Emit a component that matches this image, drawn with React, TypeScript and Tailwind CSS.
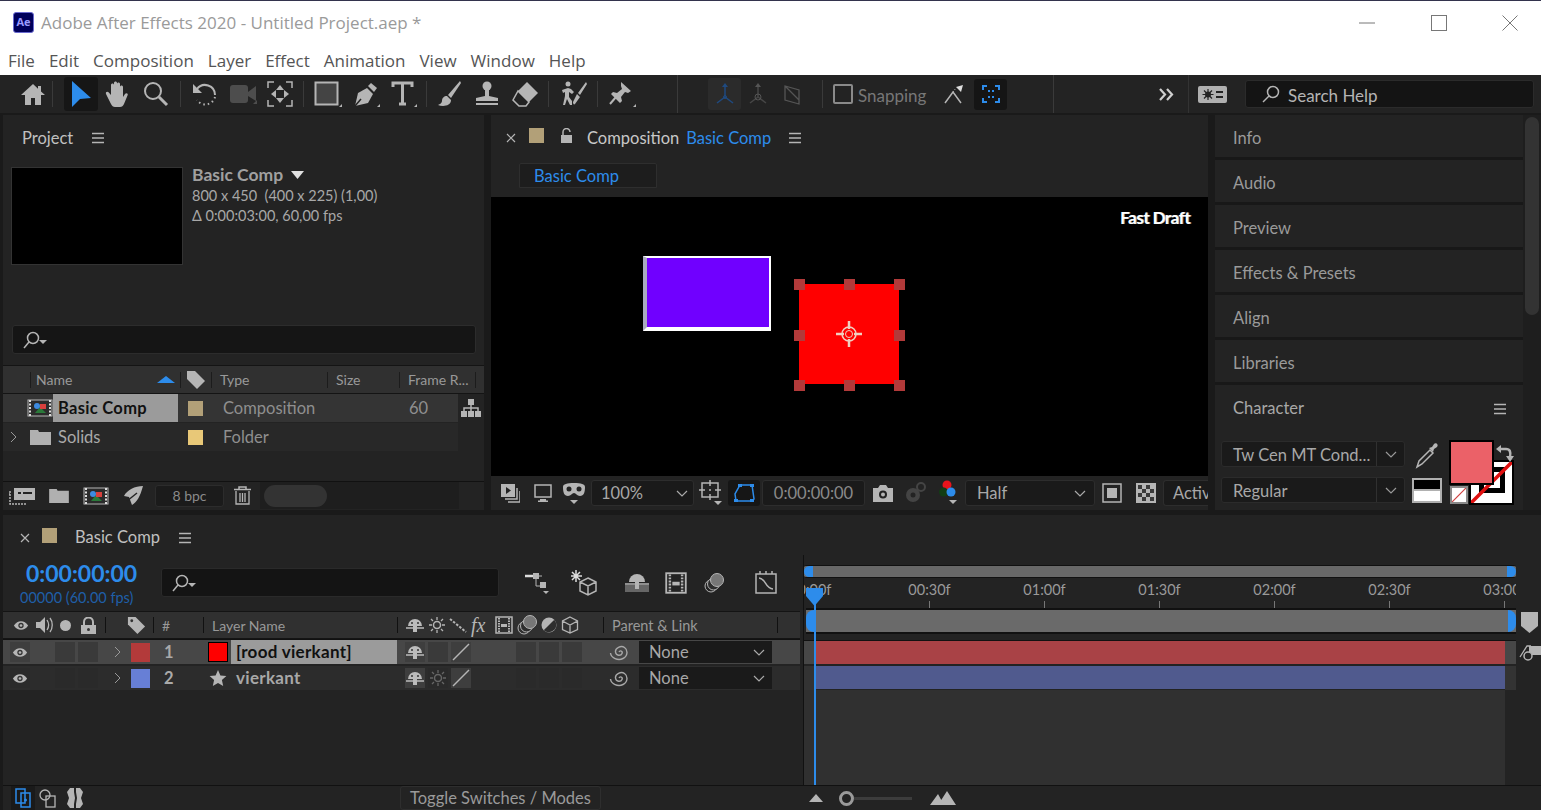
import React from "react"

const G = "#b5b5b5"

const Icon = ({ w = 24, h = 24, vb, children, className = "" }: { w?: number; h?: number; vb?: string; children: React.ReactNode; className?: string }) => (
	<svg width={w} height={h} viewBox={vb || `0 0 ${w} ${h}`} className={"shrink-0 " + className} fill="none">
		{children}
	</svg>
)

const Home = () => (
	<Icon w={26} h={24}>
		<path d="M13 2 1 13h4v10h6v-7h4v7h6V13h4l-4-3.6V4h-3v2.7z" fill={G} />
	</Icon>
)
const Arrow = () => (
	<Icon w={22} h={28}>
		<path d="M2 1v26l8-8 11-1z" fill="#2d8ceb" />
	</Icon>
)
const Hand = () => (
	<Icon w={26} h={28}>
		<path d="M6 24 1 14c-.8-2 1.6-3 2.8-1.4L6 15V5c0-2 3-2 3 0v7V3c0-2 3-2 3 0v9V4c0-2 3-2 3 0v9V7c0-2 3-2 3 0v10l2-3c1.200-1.700 3.500-.5 2.600 1.300L19 24c-1 2-2 3-4 3h-5c-2 0-3-1-4-3z" fill={G} />
	</Icon>
)
const Zoom = () => (
	<Icon w={26} h={26}>
		<circle cx="10" cy="10" r="8" stroke={G} strokeWidth="2" />
		<path d="m16 16 8 8" stroke={G} strokeWidth="3" />
	</Icon>
)
const Rotate = () => (
	<Icon w={26} h={26}>
		<path d="M5 8a10 10 0 0 1 18 6" stroke={G} strokeWidth="2" />
		<path d="M23 16a10 10 0 0 1-18 3" stroke={G} strokeWidth="2" strokeDasharray="1.500 3" />
		<path d="M1 3v9h9z" fill={G} />
	</Icon>
)
const Camera = () => (
	<Icon w={28} h={22}>
		<rect x="1" y="2" width="18" height="18" rx="3" fill="#4d4d4d" />
		<path d="m19 9 8-6v15l-8-5z" fill="#4d4d4d" />
		<path d="M28 21h-4l4-4z" fill="#4d4d4d" />
	</Icon>
)
const PanBehind = () => (
	<Icon w={26} h={26}>
		<path d="M1 7V1h6M19 1h6v6M1 19v6h6M25 19v6h-6" stroke={G} strokeWidth="1.500" />
		<path d="M13 4l4 5H9zM13 22l4-5H9zM4 13l5-4v8zM22 13l-5-4v8z" fill={G} />
	</Icon>
)
const RectTool = () => (
	<Icon w={28} h={26}>
		<rect x="1.500" y="1.500" width="22" height="22" fill="#444" stroke={G} strokeWidth="2" />
		<path d="M28 26h-3l3-3z" fill={G} />
	</Icon>
)
const Pen = () => (
	<Icon w={28} h={28}>
		<path d="M3 26 6 13l9-5 6 6-5 9z" fill={G} />
		<path d="m16 6 3-3 6 5-3 4z" fill={G} />
		<path d="m3 26 6-7" stroke="#232323" strokeWidth="1.500" />
		<path d="M28 27h-3l3-3z" fill={G} />
	</Icon>
)
const TextTool = () => (
	<Icon w={26} h={26}>
		<path d="M2 6V2h19v4M11.500 2v21M8 23h7" stroke={G} strokeWidth="3" />
		<path d="M26 26h-3l3-3z" fill={G} />
	</Icon>
)
const Brush = () => (
	<Icon w={26} h={28}>
		<path d="M24 1 12 15l3 3L25 3z" fill={G} />
		<path d="M11 16c-3 0-5 2-5 5 0 2-2 3-4 4 5 2 13 1 13-5z" fill={G} />
	</Icon>
)
const Stamp = () => (
	<Icon w={28} h={26}>
		<circle cx="14" cy="5" r="4.500" fill={G} />
		<path d="M12 9h4v6l9 2v3H3v-3l9-2z" fill={G} />
		<path d="M3 23h22" stroke={G} strokeWidth="2" />
	</Icon>
)
const Eraser = () => (
	<Icon w={28} h={28}>
		<path d="m16 2 11 11-9 9-11-11z" fill={G} />
		<path d="m7 11 11 11-3 4H8l-6-6z" stroke={G} strokeWidth="1.500" />
	</Icon>
)
const Roto = () => (
	<Icon w={30} h={30}>
		<circle cx="10" cy="5" r="2.500" fill={G} />
		<path d="m4 11 6-2 3 1 3 3-2 2-3-2v5l3 4v4h-2l-3-6-2 6H5l2-9v-4l-2 1z" fill={G} />
		<path d="M28 3 20 14l2 2 7-11zM19 15l3 3-5 7c-1 1-2 0-2-2z" fill={G} />
	</Icon>
)
const Pin = () => (
	<Icon w={28} h={28}>
		<path d="m13 2 10 9-3 2-3-1-4 5 1 4-2 2-9-9 2-2 4 1 5-4-1-3z" fill={G} />
		<path d="M8 17 2 24" stroke={G} strokeWidth="2" />
		<path d="M28 27h-3l3-3z" fill={G} />
	</Icon>
)
const AxisIcon = ({ c, dim }: { c: string; dim?: boolean }) => (
	<Icon w={22} h={24}>
		<path d="M11 4v11M11 15l-8 6M11 15l8 6" stroke={c} strokeWidth="1.500" opacity={dim ? 0.7 : 1} />
		<path d="m11 1 3 4H8z" fill={c} />
		<circle cx="11" cy="15" r={dim ? 3 : 1.500} stroke={c} />
	</Icon>
)
const Snap = () => (
	<Icon w={22} h={22}>
		<path d="M2 20 10 9l8 11" stroke={G} strokeWidth="1.500" />
		<path d="m20 2-7 2 5 5z" fill="#ddd" />
		<path d="m10 9 3-4" stroke={G} strokeDasharray="1 1.500" />
	</Icon>
)
const FocusBox = () => (
	<Icon w={18} h={18}>
		<path d="M1 5V1h4M13 1h4v4M1 13v4h4M17 13v4h-4M6 6h2M10 6h2M6 12h2M10 12h2" stroke="#2d8ceb" strokeWidth="2" />
	</Icon>
)
const SearchIcon = ({ caret }: { caret?: boolean }) => (
	<Icon w={26} h={18}>
		<circle cx="10" cy="7" r="5.500" stroke={G} strokeWidth="1.500" />
		<path d="M6 11 1 17" stroke={G} strokeWidth="1.500" />
		{caret && <path d="M16 9h8l-4 4z" fill={G} />}
	</Icon>
)
const Chevron = ({ c = "#aaa" }: { c?: string }) => (
	<Icon w={12} h={7}>
		<path d="m1 1 5 5 5-5" stroke={c} strokeWidth="1.200" />
	</Icon>
)
const Menu = () => (
	<Icon w={14} h={12}>
		<path d="M1 1.500h12M1 6h12M1 10.500h12" stroke={G} strokeWidth="1.500" />
	</Icon>
)
const Close = () => (
	<Icon w={10} h={10}>
		<path d="m1 1 8 8M9 1 1 9" stroke={G} strokeWidth="1.200" />
	</Icon>
)
const Right = () => (
	<Icon w={7} h={12}>
		<path d="m1 1 5 5-5 5" stroke="#999" strokeWidth="1" />
	</Icon>
)
const Eye = () => (
	<Icon w={16} h={11} vb="0 0 18 12">
		<path d="M1 6c4-6.500 12-6.500 16 0-4 6.500-12 6.500-16 0z" fill={G} />
		<circle cx="9" cy="6" r="3" fill="#333" />
		<circle cx="9" cy="6" r="1.500" fill={G} />
	</Icon>
)
const Tag = () => (
	<Icon w={19} h={19} vb="0 0 20 20">
		<path d="M1 1h8l10 10-8 8L1 9z" fill={G} />
		<circle cx="5" cy="5" r="1.500" fill="#333" />
	</Icon>
)
const Shy = ({ dim }: { dim?: boolean }) => (
	<Icon w={20} h={16}>
		<path d="M3 9a7 7 0 0 1 14 0z" fill={dim ? "#aaa" : "#bbb"} />
		<path d="M1 11h18" stroke="#bbb" strokeWidth="1.500" />
		<path d="M8 6h4v9H8z" fill="#bbb" />
		<circle cx="7" cy="6" r="1" fill="#333" />
		<circle cx="13" cy="6" r="1" fill="#333" />
	</Icon>
)
const Sun = ({ c = G }: { c?: string }) => (
	<Icon w={16} h={16}>
		<circle cx="8" cy="8" r="3.500" stroke={c} strokeWidth="1.500" />
		<path d="M8 0v3M8 13v3M0 8h3M13 8h3M2 2l2 2M12 12l2 2M14 2l-2 2M4 12l-2 2" stroke={c} strokeWidth="1.300" />
	</Icon>
)
const Film = ({ w = 18, h = 18 }: { w?: number; h?: number }) => (
	<Icon w={w} h={h} vb="0 0 18 18">
		<rect x="1" y="1" width="16" height="16" stroke={G} strokeWidth="1.500" />
		<path d="M4 2v14M14 2v14" stroke={G} strokeWidth="2" strokeDasharray="1.500 1" />
		<path d="M6 8h6v3H6z" fill={G} />
	</Icon>
)
const Stack = () => (
	<Icon w={20} h={20}>
		<circle cx="7" cy="13" r="6" stroke={G} />
		<circle cx="9.500" cy="11" r="6" fill="#2e2e2e" stroke={G} />
		<circle cx="13" cy="7" r="6.500" fill="#777" stroke={G} />
	</Icon>
)
const Adjust = () => (
	<Icon w={16} h={16}>
		<circle cx="8" cy="8" r="7.500" fill={G} />
		<path d="M13.300 2.700A7.500 7.500 0 0 1 2.700 13.300z" fill="#2e2e2e" />
	</Icon>
)
const Cube = ({ c = G, s = 18 }: { c?: string; s?: number }) => (
	<Icon w={s} h={s} vb="0 0 18 18">
		<path d="M9 1 16.500 5v8.500L9 17l-7.500-3.500V5zM1.500 5 9 9l7.500-4M9 9v8" stroke={c} strokeWidth="1.300" />
	</Icon>
)
const Spiral = () => (
	<Icon w={20} h={18}>
		<path d="M10 9c1-2 4-1 3 1.500S7 13 6.500 9 12 2 15.500 4.500 19 13 14 15.500 2 15 1.500 10" stroke="#a8a8a8" strokeWidth="1.400" />
	</Icon>
)
const Slash = () => (
	<Icon w={18} h={18}>
		<path d="M1 17 17 1" stroke={G} strokeWidth="1.500" />
	</Icon>
)
const Star = () => (
	<Icon w={18} h={18}>
		<path d="m9 1 2.400 5.500 6 .6-4.500 4 1.300 6L9 14l-5.200 3 1.300-6-4.500-4 6-.6z" fill={G} />
	</Icon>
)
const CompIcon = ({ w = 26, h = 18 }: { w?: number; h?: number }) => (
	<Icon w={w} h={h} vb="0 0 26 18">
		<rect x="1" y="1" width="24" height="16" fill="#2b2b2b" stroke={G} />
		<path d="M3 1v16M23 1v16" stroke="#ddd" strokeWidth="2" strokeDasharray="2 1.500" />
		<path d="m8 14 5-6 6 6z" fill="#2a7a3a" />
		<circle cx="10" cy="7" r="3" fill="#3d8be0" />
		<rect x="13" y="5" width="6" height="5" fill="#d8403d" />
	</Icon>
)
const FolderIcon = ({ w = 21, h = 16 }: { w?: number; h?: number }) => (
	<Icon w={w} h={h} vb="0 0 21 16">
		<path d="M0 1h8l1 2h12v13H0z" fill="#b0b0b0" />
	</Icon>
)

const Sep = ({ className = "h-[26px] mx-[2px]" }: { className?: string }) => (
	<div className={"w-px bg-[#3a3a3a] shrink-0 " + className} />
)

const Slot = ({ children, className = "w-[38px]" }: { children?: React.ReactNode; className?: string }) => (
	<div className={"flex items-center justify-center shrink-0 " + className}>{children}</div>
)

const TitleBar = () => (
	<div className="bg-white shrink-0 border-t border-[#33334d] font-['Open_Sans',sans-serif]">
		<div className="h-[43px] flex items-center">
			<div className="ml-[13px] w-[21px] h-[21px] rounded-[3px] bg-[#00005b] border border-[#6a6ad0] text-[#9a9aff] font-bold text-[11px] flex items-center justify-center">Ae</div>
			<span className="ml-[7px] text-[17px] text-[#9a9a9a] whitespace-nowrap">Adobe After Effects 2020 - Untitled Project.aep *</span>
			<div className="ml-auto flex items-center h-full text-[#777]">
				<Slot className="w-[64px]"><Icon w={16} h={2}><path d="M0 1h16" stroke="#777" /></Icon></Slot>
				<Slot className="w-[80px]"><Icon w={16} h={16}><rect x=".5" y=".5" width="15" height="15" stroke="#777" /></Icon></Slot>
				<Slot className="w-[62px]"><Icon w={16} h={16}><path d="m.5.5 15 15M15.500.5l-15 15" stroke="#777" /></Icon></Slot>
			</div>
		</div>
		<div className="h-[31px] flex items-center pl-[8px] gap-[14px] text-[17px] text-[#555] pt-[3px]">
			{["File", "Edit", "Composition", "Layer", "Effect", "Animation", "View", "Window", "Help"].map((m) => (
				<span key={m}>{m}</span>
			))}
		</div>
	</div>
)

const Toolbar = () => (
	<div className="h-[40px] bg-[#232323] shrink-0 flex items-center border-b-2 border-[#1a1a1a]">
		<div className="w-[14px] shrink-0" />
		<Slot><Home /></Slot>
		<Sep className="h-[26px] mr-[11px]" />
		<Slot className="w-[34px] h-[34px] bg-[#161616] rounded-[3px]"><Arrow /></Slot>
		<Slot className="w-[39px]"><Hand /></Slot>
		<Slot className="w-[38px]"><Zoom /></Slot>
		<Sep className="h-[26px] mx-[5px]" />
		<Slot><Rotate /></Slot>
		<Slot><Camera /></Slot>
		<Slot className="w-[36px]"><PanBehind /></Slot>
		<Sep className="h-[26px] mx-[5px]" />
		<Slot><RectTool /></Slot>
		<Slot><Pen /></Slot>
		<Slot><TextTool /></Slot>
		<Sep className="h-[26px] mx-[3px]" />
		<Slot><Brush /></Slot>
		<Slot><Stamp /></Slot>
		<Slot className="w-[37px]"><Eraser /></Slot>
		<Sep className="h-[26px] mx-[5px]" />
		<Slot><Roto /></Slot>
		<Sep className="h-[26px] mx-[5px]" />
		<Slot><Pin /></Slot>
		<Sep className="h-[38px] ml-[36px] mr-[30px] bg-[#2c2c2c]" />
		<Slot className="w-[33px] h-[32px] bg-[#2b2b2b] rounded-[3px]"><AxisIcon c="#1f4a80" /></Slot>
		<Slot className="w-[34px]"><AxisIcon c="#555" dim /></Slot>
		<Slot className="w-[34px]"><Icon w={22} h={24}><path d="M4 4v14l14 4V8zM4 4l14 14" stroke="#555" strokeWidth="1.300" /></Icon></Slot>
		<Sep className="h-[28px] ml-[13px] mr-[10px]" />
		<div className="w-[20px] h-[20px] rounded-[2px] border-2 border-[#8a8a8a] shrink-0" />
		<span className="ml-[5px] mt-[3px] text-[#777] text-[17px] w-[85px] shrink-0">Snapping</span>
		<Snap />
		<div className="w-[9px] shrink-0" />
		<Slot className="w-[33px] h-[31px] bg-[#151515] rounded-[3px]"><FocusBox /></Slot>
		<Sep className="h-[38px] ml-[46px] bg-[#2c2c2c]" />
		<Icon w={16} h={13} className="ml-[104px]">
			<path d="m2 1 5 5.500L2 12M9 1l5 5.500L9 12" stroke="#d0d0d0" strokeWidth="2.200" />
		</Icon>
		<Sep className="h-[38px] ml-[14px] mr-[9px] bg-[#333]" />
		<div className="w-[29px] h-[17px] rounded-[2px] bg-[#b0b0b0] shrink-0 flex items-center justify-center">
			<Icon w={25} h={13}>
				<circle cx="8" cy="6.500" r="3" fill="#232323" />
				<path d="M8 1v11M2.500 6.500h11M4 2.500l8 8M12 2.500l-8 8" stroke="#232323" strokeWidth="1.200" />
				<path d="M16 4h7M16 9h7" stroke="#232323" strokeWidth="2" />
			</Icon>
		</div>
		<div className="ml-[18px] w-[289px] h-[28px] rounded-[3px] bg-[#141414] border border-[#2b2b2b] flex items-center pl-[16px] shrink-0">
			<Icon w={19} h={18}>
				<circle cx="11" cy="7" r="5.500" stroke={G} strokeWidth="1.500" />
				<path d="M7 11 1 17" stroke={G} strokeWidth="1.500" />
			</Icon>
			<span className="ml-[7px] mt-[3px] text-[#b5b5b5] text-[17px]">Search Help</span>
		</div>
	</div>
)

const ColHead = ({ className, children }: { className: string; children?: React.ReactNode }) => (
	<div className={"flex items-center h-[16px] border-r border-[#1c1c1c] shrink-0 " + className}>{children}</div>
)

const ProjectPanel = () => (
	<div className="w-[481px] ml-[3px] bg-[#232323] flex flex-col shrink-0 text-[#a8a8a8]">
		<div className="h-[46px] flex items-center pl-[19px] gap-[18px] text-[#c0c0c0] text-[16.5px] shrink-0">
			<span>Project</span>
			<Menu />
		</div>
		<div className="h-[164px] flex pl-[8px] pt-[6px] gap-[9px] shrink-0">
			<div className="w-[172px] h-[98px] bg-black border border-[#333]" />
			<div className="text-[14.5px] leading-[20px] -mt-[2px]">
				<div className="flex items-center gap-[8px] text-[17.5px] font-bold text-[#a0a0a0]">
					Basic Comp
					<Icon w={13} h={8}><path d="M0 0h13L6.500 8z" fill="#e0e0e0" /></Icon>
				</div>
				<div className="mt-[1px]">800 x 450&nbsp; (400 x 225) (1,00)</div>
				<div>Δ 0:00:03:00, 60,00 fps</div>
			</div>
		</div>
		<div className="h-[40px] shrink-0 pl-[9px]">
			<div className="w-[464px] h-[29px] bg-[#151515] border border-[#2c2c2c] rounded-[3px] flex items-center pl-[10px]">
				<SearchIcon caret />
			</div>
		</div>
		<div className="h-[29px] bg-[#303030] border-y border-[#141414] flex items-center text-[14px] text-[#999] shrink-0">
			<ColHead className="w-[28px]" />
			<ColHead className="w-[150px] pl-[5px] justify-between pr-[5px]">
				Name
				<Icon w={18} h={7}><path d="M9 0l9 7H0z" fill="#2d8ceb" /></Icon>
			</ColHead>
			<ColHead className="w-[31px] justify-center"><Icon w={20} h={20}><path d="M1 1h8l10 10-8 8L1 9z" fill={G} /></Icon></ColHead>
			<ColHead className="w-[116px] pl-[8px]">Type</ColHead>
			<ColHead className="w-[72px] pl-[8px]">Size</ColHead>
			<ColHead className="w-[76px] pl-[8px]">Frame R...</ColHead>
		</div>
		<div className="flex flex-1 min-h-0">
			<div className="w-[455px] shrink-0">
				<div className="h-[28px] bg-[#343434] flex items-center text-[16.5px]">
					<Slot className="w-[24px]" />
					<Slot className="w-[26px]"><CompIcon /></Slot>
					<div className="w-[125px] h-full bg-[#9b9b9b] text-[#111] font-bold pl-[5px] flex items-center shrink-0 tracking-[.3px]">Basic Comp</div>
					<Slot className="w-[35px]"><div className="w-[15px] h-[15px] bg-[#b2a078]" /></Slot>
					<span className="ml-[10px] w-[186px] text-[#8f8f8f]">Composition</span>
					<span className="text-[#8f8f8f]">60</span>
				</div>
				<div className="h-[29px] bg-[#282828] flex items-center text-[16.5px] border-t border-[#232323]">
					<Slot className="w-[20px]"><Right /></Slot>
					<Slot className="w-[34px]"><FolderIcon /></Slot>
					<span className="w-[121px] pl-[1px] shrink-0 text-[#aaa]">Solids</span>
					<Slot className="w-[35px]"><div className="w-[15px] h-[15px] bg-[#e8c878]" /></Slot>
					<span className="ml-[10px] text-[#8f8f8f]">Folder</span>
				</div>
			</div>
			<Slot className="w-[26px] h-[28px]">
				<Icon w={20} h={18}>
					<path d="M7 0h6v6H7zM0 12h6v6H0zM7 12h6v6H7zM14 12h6v6h-6z" fill={G} />
					<path d="M10 6v3M3 12V9h14v3M10 9v3" stroke={G} strokeWidth="1.500" />
				</Icon>
			</Slot>
		</div>
		<div className="h-[28px] border-t border-[#111] flex items-center shrink-0 mb-[1px]">
			<Slot className="w-[38px]">
				<Icon w={26} h={18}>
					<path d="M1 4v13h16M1 7h-1" stroke={G} strokeWidth="1.500" strokeDasharray="2 1" />
					<rect x="5" y="1" width="21" height="12" fill={G} />
					<path d="M9 6h3M14 6h9" stroke="#232323" strokeWidth="2" />
				</Icon>
			</Slot>
			<Slot className="w-[36px]"><FolderIcon w={20} h={15} /></Slot>
			<Slot className="w-[37px]"><CompIcon w={26} h={18} /></Slot>
			<Slot className="w-[37px]">
				<Icon w={20} h={20}>
					<path d="M20 0C12 0 4 4 1 10l5 1c1 3 2 5 3 8 5-3 8-8 11-19z" fill={G} />
					<path d="M4 15 14 7" stroke="#232323" strokeWidth="1.500" />
				</Icon>
			</Slot>
			<div className="w-[69px] h-[22px] ml-[4px] rounded-[3px] bg-[#1b1b1b] border border-[#2c2c2c] text-[#8a8a8a] text-[14px] flex items-center justify-center shrink-0">8 bpc</div>
			<Slot className="w-[36px]">
				<Icon w={17} h={19}>
					<path d="M0 3.500h17M5 3V1h7v2" stroke={G} strokeWidth="1.500" />
					<path d="M2 5v13h13V5M6 7v9M8.500 7v9M11 7v9" stroke={G} strokeWidth="1.300" />
				</Icon>
			</Slot>
			<div className="flex-1 h-full bg-[#1e1e1e] flex items-center pl-[4px] mr-[25px]">
				<div className="w-[63px] h-[22px] rounded-full bg-[#333]" />
			</div>
		</div>
	</div>
)

const Handle = ({ className }: { className: string }) => (
	<div className={"absolute w-[11px] h-[11px] bg-[#b23a3a] " + className} />
)

const CompPanel = () => (
	<div className="w-[717px] ml-[7px] bg-[#232323] flex flex-col shrink-0">
		<div className="h-[46px] flex items-center pl-[15px] text-[16.5px] shrink-0 text-[#c8c8c8]">
			<Close />
			<div className="w-[15px] h-[15px] bg-[#b2a078] ml-[13px] mb-[5px]" />
			<Icon w={16} h={16} className="ml-[15px] mb-[5px]">
				<path d="M4 7V4a3.500 3.500 0 0 1 7 0" stroke={G} strokeWidth="1.500" />
				<rect x="2" y="7" width="11" height="8" fill={G} />
			</Icon>
			<span className="ml-[12px]">Composition</span>
			<span className="ml-[7px] text-[#2d8ceb]">Basic Comp</span>
			<div className="ml-[17px]"><Menu /></div>
		</div>
		<div className="h-[36px] pl-[28px] pt-[2px] shrink-0">
			<div className="w-[138px] h-[25px] bg-[#1d1d1d] border border-[#2e2e2e] rounded-t-[2px] text-[#2d8ceb] text-[16.5px] pl-[14px] pt-[1px] flex items-center">Basic Comp</div>
		</div>
		<div className="h-[279px] bg-black relative overflow-hidden shrink-0">
			<div className="absolute right-[18px] top-[8px] text-white font-bold text-[17px] tracking-[-.5px] [text-shadow:1px_0_0_#999]">Fast Draft</div>
			<div className="absolute left-[152px] top-[59px] w-[128px] h-[75px] bg-[#7000ff] border-2 border-l-4 border-white border-b-4 border-l-[#a9a9c0]" />
			<div className="absolute left-[308px] top-[87px] w-[100px] h-[100px] bg-[#ff0000] flex items-center justify-center">
				<Icon w={28} h={28}>
					<circle cx="14" cy="14" r="7" stroke="#f0cfc0" strokeWidth="1.500" />
					<circle cx="14" cy="14" r="3.500" stroke="#f0cfc0" />
					<path d="M14 1v8M14 19v8M1 14h8M19 14h8" stroke="#f0cfc0" strokeWidth="2.500" />
				</Icon>
			</div>
			<Handle className="left-[303px] top-[82px]" />
			<Handle className="left-[353px] top-[82px]" />
			<Handle className="left-[403px] top-[82px]" />
			<Handle className="left-[303px] top-[133px]" />
			<Handle className="left-[403px] top-[133px]" />
			<Handle className="left-[303px] top-[183px]" />
			<Handle className="left-[353px] top-[183px]" />
			<Handle className="left-[403px] top-[183px]" />
		</div>
		<div className="h-[34px] flex items-center overflow-hidden text-[#a8a8a8] text-[16.5px] shrink-0">
			<Slot className="w-[38px]">
				<Icon w={20} h={20}>
					<rect x="1" y="1" width="14" height="13" fill={G} />
					<path d="m6 4 5 3.500L6 11z" fill="#232323" />
					<path d="M17 5v11H5M20 8v11H8" stroke={G} strokeWidth="1.500" />
				</Icon>
			</Slot>
			<Slot className="w-[28px]">
				<Icon w={20} h={18}>
					<rect x="2" y="1" width="16" height="12" stroke={G} strokeWidth="1.500" />
					<path d="M7 16h6M5 17.500h10" stroke={G} strokeWidth="2" />
				</Icon>
			</Slot>
			<Slot className="w-[34px]">
				<Icon w={24} h={24}>
					<path d="M1 6c0-3 4-4 11-4s11 1 11 4c0 5-1 9-5 9-3 0-4-3-6-3s-3 3-6 3c-4 0-5-4-5-9z" fill={G} />
					<circle cx="7" cy="8" r="2.500" fill="#232323" />
					<circle cx="17" cy="8" r="2.500" fill="#232323" />
					<path d="M8 19h8l-4 4z" fill={G} />
				</Icon>
			</Slot>
			<div className="w-[103px] h-[26px] bg-[#1a1a1a] border border-[#2d2d2d] rounded-[3px] flex items-center justify-between pl-[9px] pr-[5px] shrink-0">
				100%<Chevron />
			</div>
			<Slot className="w-[34px]">
				<Icon w={24} h={26}>
					<rect x="3" y="3" width="16" height="14" stroke={G} strokeWidth="1.500" />
					<path d="M11 0v6M11 14v6M0 10h6M16 10h6" stroke={G} strokeWidth="1.500" />
					<circle cx="11" cy="10" r="1" fill={G} />
					<path d="M15 21h8l-4 4z" fill={G} />
				</Icon>
			</Slot>
			<Slot className="w-[32px] h-[26px] bg-[#161616] rounded-[3px]">
				<Icon w={22} h={20}>
					<path d="M7 2h12l2 14-2 2H3l-1-7z" stroke="#2d8ceb" strokeWidth="1.500" />
					<path d="M5 1h4v3H5zM17 1h4v3h-4zM1 16h4v3H1zM17 16h4v3h-4z" fill="#2d8ceb" />
				</Icon>
			</Slot>
			<div className="w-[103px] h-[26px] ml-[2px] bg-[#1a1a1a] border border-[#2d2d2d] rounded-[3px] flex items-center justify-center shrink-0 text-[#8a8a8a]">0:00:00:00</div>
			<Slot className="w-[35px]">
				<Icon w={22} h={18}>
					<path d="M1 4h5l2-3h6l2 3h5v14H1z" fill={G} />
					<circle cx="11" cy="10.500" r="4" fill="#232323" />
					<circle cx="11" cy="10.500" r="2" fill={G} />
				</Icon>
			</Slot>
			<Slot className="w-[32px]">
				<Icon w={24} h={22}>
					<circle cx="9" cy="13" r="7" fill="#444" />
					<circle cx="9" cy="13" r="2.500" fill="#232323" />
					<circle cx="17" cy="5" r="4" stroke="#444" strokeWidth="2" />
				</Icon>
			</Slot>
			<Slot className="w-[33px]">
				<Icon w={20} h={26}>
					<circle cx="8" cy="5" r="4.500" fill="#e8141c" />
					<circle cx="4.500" cy="12" r="4.500" fill="#123d14" />
					<circle cx="12" cy="12" r="4.500" fill="#2d8ceb" />
					<path d="M10 20h8l-4 4z" fill={G} />
				</Icon>
			</Slot>
			<div className="w-[130px] h-[26px] bg-[#1a1a1a] border border-[#2d2d2d] rounded-[3px] flex items-center justify-between pl-[11px] pr-[8px] shrink-0">
				Half<Chevron />
			</div>
			<Slot className="w-[34px]">
				<Icon w={20} h={20}>
					<rect x="1" y="1" width="18" height="18" stroke={G} strokeWidth="1.500" />
					<rect x="5" y="5" width="10" height="10" fill={G} />
				</Icon>
			</Slot>
			<Slot className="w-[34px]">
				<Icon w={20} h={20}>
					<rect x="0" y="0" width="20" height="20" fill={G} />
					<path d="M2 2h4v4H2zM10 2h4v4h-4zM6 6h4v4H6zM14 6h4v4h-4zM2 10h4v4H2zM10 10h4v4h-4zM6 14h4v4H6zM14 14h4v4h-4z" fill="#3a3a3a" />
				</Icon>
			</Slot>
			<div className="h-[26px] w-[45px] bg-[#1a1a1a] border border-[#2d2d2d] border-r-0 rounded-l-[3px] pl-[9px] flex items-center shrink-0">Activ</div>
		</div>
	</div>
)

const Tab = ({ label }: { label: string }) => (
	<div className="h-[45px] flex items-center pl-[18px] pt-[5px] text-[16.5px] text-[#9a9a9a] border-b-[3px] border-[#181818] shrink-0">{label}</div>
)

const Drop = ({ label }: { label: string }) => (
	<div className="w-[184px] h-[26px] flex bg-[#1a1a1a] border border-[#2b2b2b] rounded-[3px] text-[16.5px] text-[#a8a8a8]">
		<div className="w-[155px] pl-[11px] pt-[2px] flex items-center border-r border-[#303030] whitespace-nowrap">{label}</div>
		<div className="flex-1 flex items-center justify-center"><Chevron c="#999" /></div>
	</div>
)

const RightPanel = () => (
	<div className="flex-1 ml-[7px] flex min-w-0">
		<div className="w-[308px] bg-[#232323] flex flex-col shrink-0">
			{["Info", "Audio", "Preview", "Effects & Presets", "Align", "Libraries"].map((t) => (
				<Tab key={t} label={t} />
			))}
			<div className="h-[45px] flex items-center justify-between pl-[18px] pr-[16px] pt-[2px] text-[16.5px] text-[#a8a8a8] shrink-0">
				Character <Menu />
			</div>
			<div className="pl-[6px] pt-[11px] flex relative flex-1">
				<div className="flex flex-col gap-[10px]">
					<Drop label="Tw Cen MT Cond..." />
					<Drop label="Regular" />
				</div>
				<Icon w={26} h={28} className="ml-[9px]">
					<path d="m3 26 2-6L16 9l3 3L8 23z" stroke={G} strokeWidth="1.500" />
					<path d="m15 7 3-1 2-3c2-2 5 1 3 3l-3 2-1 3z" fill={G} />
				</Icon>
				{/* colour swatches overlap, as in the panel */}
				<div className="absolute left-[197px] top-[48px] w-[30px] h-[25px] border-2 border-[#b0b0b0]">
					<div className="h-[9px] bg-black" />
					<div className="h-[12px] bg-white border-t-2 border-[#b0b0b0]" />
				</div>
				<div className="absolute left-[235px] top-[56px] w-[18px] h-[18px] border-2 border-[#8a8a8a] bg-white overflow-hidden">
					<Icon w={14} h={14}><path d="M0 14 14 0" stroke="#d04040" strokeWidth="1.200" /></Icon>
				</div>
				<div className="absolute left-[254px] top-[30px] w-[45px] h-[45px] bg-white border-2 border-black overflow-hidden">
					<div className="absolute left-[8px] top-[5px] w-[26px] h-[26px] border-[5px] border-black" />
					<Icon w={41} h={41} className="absolute left-0 top-0"><path d="M0 41 41 0" stroke="#e01010" strokeWidth="3.500" /></Icon>
				</div>
				<div className="absolute left-[234px] top-[10px] w-[45px] h-[45px] bg-[#eb6168] border-2 border-black" />
				<Icon w={18} h={18} className="absolute left-[281px] top-[15px]">
					<path d="M3 4h7c4 0 5 3 4 8" stroke={G} strokeWidth="2.500" />
					<path d="M5 0 0 4l5 4zM10 11h8l-4 6z" fill={G} />
				</Icon>
			</div>
		</div>
		<div className="flex-1 bg-[#1e1e1e] flex justify-center pt-[2px]">
			<div className="w-[14px] h-[198px] bg-[#333] rounded-full" />
		</div>
	</div>
)

const Cell = ({ className = "bg-[#2a2a2a]", children }: { className?: string; children?: React.ReactNode }) => (
	<div className={"w-[20px] h-[20px] flex items-center justify-center shrink-0 ml-[3px] " + className}>{children}</div>
)

const LayerRow = ({ num, swatch, name, selected }: { num: string; swatch: string; name: string; selected?: boolean }) => {
	const dark = selected ? "bg-[#3a3a3a]" : "bg-[#2a2a2a]"
	return (
		<div className={"h-[24px] flex items-center text-[#bcbcbc] shrink-0 " + (selected ? "bg-[#474747]" : "bg-[#2c2c2c]")}>
			<div className="w-[4px] shrink-0" />
			<Cell className={selected ? "bg-[#3e3e3e]" : "bg-[#2a2a2a]"}><Eye /></Cell>
			<div className="w-[22px] shrink-0" />
			<Cell className={dark} />
			<Cell className={dark} />
			<Slot className="w-[19px] ml-[10px]"><Right /></Slot>
			<div className="w-[19px] h-[19px] ml-[4px] shrink-0" style={{ backgroundColor: swatch }} />
			<span className="w-[57px] text-[16.5px] font-bold pl-[14px] text-[#aaa] shrink-0">{num}</span>
			<div className="w-[22px] h-[22px] shrink-0 flex items-center justify-center">
				{selected ? <div className="w-[20px] h-[20px] bg-[#ff0000] border border-black" /> : <Star />}
			</div>
			<div className={"w-[166px] h-full ml-[2px] pl-[5px] text-[17px] font-bold flex items-center shrink-0 tracking-[.3px] " + (selected ? "bg-[#9b9b9b] text-[#111]" : "text-[#a8a8a8]")}>{name}</div>
			<div className="w-[20px] h-[20px] ml-[8px] flex items-center justify-center shrink-0 bg-[#3e3e3e]"><Shy /></div>
			<Cell className={dark}>{selected ? null : <Sun c="#666" />}</Cell>
			<Cell className="bg-[#3e3e3e]"><Slash /></Cell>
			<div className="w-[42px] shrink-0" />
			<Cell className={dark} />
			<Cell className={dark} />
			<Cell className={dark} />
			<Slot className="w-[40px] ml-[17px]"><Spiral /></Slot>
			<div className="w-[133px] h-[22px] bg-[#1a1a1a] flex items-center justify-between pl-[10px] pr-[7px] text-[16.5px] text-[#a8a8a8] shrink-0">
				None <Chevron />
			</div>
		</div>
	)
}

const ticks = ["0:00f", "00:30f", "01:00f", "01:30f", "02:00f", "02:30f", "03:00f"]

const Timeline = () => (
	<div className="ml-[3px] mt-[5px] flex-1 min-h-0 bg-[#232323] flex flex-col w-[1538px]">
		<div className="h-[40px] flex items-center pl-[17px] pt-[5px] text-[16.5px] text-[#c0c0c0] shrink-0">
			<Close />
			<div className="w-[15px] h-[15px] bg-[#b2a078] ml-[12px] mb-[5px]" />
			<span className="ml-[18px] w-[103px]">Basic Comp</span>
			<Menu />
		</div>
		<div className="flex-1 min-h-0 flex">
			<div className="w-[797px] shrink-0 flex flex-col">
				<div className="h-[56px] flex shrink-0">
					<div className="w-[158px] pl-[23px] shrink-0">
						<div className="text-[#2d8ceb] text-[23px] font-bold leading-[26px] mt-[5px] whitespace-nowrap">0:00:00:00</div>
						<div className="text-[#1f5fa8] text-[14.5px] leading-[16px] mt-[4px] whitespace-nowrap -ml-[6px]">00000 (60.00 fps)</div>
					</div>
					<div className="w-[338px] h-[29px] mt-[13px] bg-[#141414] border border-[#2a2a2a] rounded-[3px] flex items-center pl-[10px] shrink-0">
						<SearchIcon caret />
					</div>
					<div className="flex items-center ml-[22px] h-[29px] mt-[13px]">
						<Slot className="w-[32px]">
							<Icon w={26} h={24}>
								<path d="M1 5h8" stroke="#ddd" strokeWidth="2.500" />
								<rect x="9" y="2" width="6" height="6" fill={G} />
								<path d="M15 5h3M12 8v7h4" stroke={G} />
								<rect x="16" y="11" width="6" height="6" fill={G} />
								<path d="M19 20h6l-3 3z" fill={G} />
							</Icon>
						</Slot>
						<Slot className="w-[42px] ml-[10px]">
							<Icon w={26} h={26}>
								<path d="M5 0v12M-1 6h12M1 2l8 8M9 2l-8 8" stroke="#ddd" strokeWidth="1.500" />
								<path d="m17 8 8 4v9l-8 4-8-4v-9zM9 12l8 4 8-4M17 16v9" stroke={G} strokeWidth="1.500" />
							</Icon>
						</Slot>
						<Slot className="w-[32px] ml-[16px]">
							<Icon w={24} h={20}>
								<path d="M0 12h24v7H0z" fill="#666" />
								<path d="M4 9a8 8 0 0 1 16 0z" fill={G} />
								<path d="M10 7h4v9h-4z" fill={G} />
								<path d="M0 11h24" stroke={G} strokeWidth="1.500" />
							</Icon>
						</Slot>
						<Slot className="w-[32px] ml-[7px]"><Film w={22} h={22} /></Slot>
						<Slot className="w-[32px] ml-[6px]"><Stack /></Slot>
						<Slot className="w-[38px] ml-[17px]">
							<Icon w={24} h={24}>
								<rect x="2" y="3" width="20" height="19" stroke={G} strokeWidth="1.500" />
								<path d="M5 7c7 0 6 11 14 11M6 0v3M12 0v3M18 0v3" stroke={G} strokeWidth="1.500" />
							</Icon>
						</Slot>
					</div>
				</div>
				<div className="h-[28px] bg-[#303030] border-y border-[#141414] flex items-center text-[#999] text-[14px] shrink-0">
					<div className="w-[10px] shrink-0" />
					<Eye />
					<Icon w={18} h={18} className="ml-[6px]">
						<path d="M1 6h4l5-5v16l-5-5H1z" fill={G} />
						<path d="M12 4c2 3 2 7 0 10M15 2c3 4 3 10 0 14" stroke={G} strokeWidth="1.300" />
					</Icon>
					<div className="ml-[7px] w-[11px] h-[11px] rounded-full bg-[#b5b5b5]" />
					<Icon w={15} h={17} className="ml-[10px]">
						<path d="M3 8V5a4.500 4.500 0 0 1 9 0v3" stroke={G} strokeWidth="2" />
						<rect x="0" y="8" width="15" height="9" fill={G} />
						<circle cx="7.500" cy="12.500" r="1.500" fill="#333" />
					</Icon>
					<div className="ml-[9px] w-px h-[16px] bg-[#111]" />
					<div className="ml-[21px]"><Tag /></div>
					<div className="ml-[7px] w-px h-[16px] bg-[#111]" />
					<span className="ml-[8px] w-[41px]">#</span>
					<div className="w-px h-[16px] bg-[#111]" />
					<span className="ml-[8px] w-[185px]">Layer Name</span>
					<div className="w-px h-[16px] bg-[#111]" />
					<div className="ml-[7px] flex items-center gap-[4px]">
						<Shy />
						<Sun />
						<Icon w={18} h={18}><path d="m1 3 16 13" stroke={G} strokeWidth="2" strokeDasharray="2.500 1.500" /></Icon>
						<span className="italic text-[20px] w-[20px] font-['Liberation_Serif',serif] text-[#b5b5b5] leading-none">fx</span>
						<Film />
						<Stack />
						<Adjust />
						<Cube />
					</div>
					<div className="ml-[24px] w-px h-[16px] bg-[#111]" />
					<span className="ml-[8px] w-[165px] whitespace-nowrap text-[14.5px] pt-[1px]">Parent &amp; Link</span>
					<div className="w-px h-[16px] bg-[#111]" />
				</div>
				<div className="border-t border-[#111]" />
				<LayerRow num="1" swatch="#b33a3a" name="[rood vierkant]" selected />
				<div className="h-[2px] bg-[#232323] shrink-0" />
				<LayerRow num="2" swatch="#677fd6" name="vierkant" />
			</div>
			<div className="w-px bg-[#111] shrink-0 ml-[3px]" />
			<div className="w-[712px] shrink-0 flex flex-col relative overflow-hidden">
				<div className="h-[10px] shrink-0" />
				<div className="h-[13px] bg-[#686868] border-y border-[#111] flex justify-between rounded-[2px] shrink-0">
					<div className="w-[9px] bg-[#2d8ceb] rounded-l-full" />
					<div className="w-[9px] bg-[#2d8ceb] rounded-r-full" />
				</div>
				<div className="h-[30px] flex overflow-hidden shrink-0 text-[#9a9a9a] text-[14.5px]">
					<div className="flex -ml-[47px]">
						{ticks.map((t) => (
							<div key={t} className="w-[115px] shrink-0 flex flex-col items-center pt-[4px]">
								<span className="leading-[16px]">{t}</span>
								<div className="w-px h-[7px] mt-[3px] bg-[#777]" />
							</div>
						))}
					</div>
				</div>
				<div className="h-[26px] ml-[2px] bg-[#6a6a6a] border-y-2 border-[#111] flex justify-between shrink-0">
					<div className="w-[8px] bg-[#2d8ceb] rounded-l-full" />
					<div className="w-[8px] bg-[#2d8ceb] rounded-r-full" />
				</div>
				<div className="h-[6px] shrink-0" />
				<div className="flex h-[24px] bg-[#474747] shrink-0 border-t border-[#111]">
					<div className="w-[11px] shrink-0" />
					<div className="w-[690px] bg-[#a94246] shrink-0" />
				</div>
				<div className="flex h-[24px] mt-[2px] bg-[#333] shrink-0">
					<div className="w-[11px] shrink-0" />
					<div className="w-[690px] bg-[#505a8e] border-b border-[#232323] shrink-0" />
				</div>
				<div className="flex-1 min-h-0 flex">
					<div className="w-[701px] bg-[#303030]" />
				</div>
				{/* playhead over the layers */}
				<div className="absolute left-[10px] top-[33px] bottom-0 w-[1.500px] bg-[#2d8ceb]" />
				<div className="absolute left-[2px] top-[33px]">
					<Icon w={17} h={20}><path d="M0 0h17v8l-8.500 10L0 8z" fill="#2d8ceb" /></Icon>
				</div>
			</div>
			<div className="flex-1 flex flex-col items-center pt-[57px] pl-[2px] min-w-0">
				<Icon w={17} h={21}><path d="M0 0h17v14l-8.500 7L0 14z" fill={G} /></Icon>
				<Icon w={22} h={18} className="mt-[10px]">
					<path d="M1 14 8 3h4" stroke={G} strokeWidth="1.300" />
					<path d="M10 3h12v9H10z" fill={G} />
					<circle cx="9" cy="13" r="4" fill="#232323" stroke={G} strokeWidth="1.500" />
				</Icon>
			</div>
		</div>
		<div className="h-[25px] shrink-0 border-t border-[#111] bg-[#232323] flex items-center">
			<Slot className="w-[24px] h-[24px] ml-[8px] bg-[#1a1a1a]">
				<Icon w={16} h={20}>
					<path d="M1 1h9v14H1zM6 5h9v14H6z" stroke="#2d8ceb" strokeWidth="1.500" />
					<circle cx="10.500" cy="12" r="1.500" fill="#2d8ceb" />
				</Icon>
			</Slot>
			<Slot className="w-[25px]">
				<Icon w={18} h={20}>
					<circle cx="6" cy="7" r="5" stroke={G} strokeWidth="1.300" />
					<rect x="7" y="8" width="9" height="11" stroke={G} strokeWidth="1.300" />
				</Icon>
			</Slot>
			<Slot className="w-[30px]">
				<Icon w={16} h={20}><path d="M3 0h4v4l1 6-1 6v4H3l-3-4 2-6-2-6zM13 0H9v4l1 6-1 6v4h4l3-4-2-6 2-6z" fill={G} /></Icon>
			</Slot>
			<div className="ml-[310px] w-[201px] h-[24px] border border-[#2e2e2e] rounded-[3px] text-[#9a9a9a] text-[16.5px] flex items-center justify-center shrink-0 whitespace-nowrap">Toggle Switches / Modes</div>
			<Icon w={14} h={8} className="ml-[208px]"><path d="M7 0l7 8H0z" fill={G} /></Icon>
			<div className="ml-[16px] w-[15px] h-[15px] rounded-full border-[3px] border-[#9a9a9a] shrink-0" />
			<div className="w-[58px] h-[3px] bg-[#3c3c3c] shrink-0" />
			<Icon w={26} h={14} className="ml-[18px]"><path d="M8 3l6 11H0zM17 0l9 14H8z" fill={G} /></Icon>
		</div>
	</div>
)

export default function App() {
	return (
		<div className="w-[1541px] h-[810px] bg-[#1a1a1a] flex flex-col overflow-hidden font-['Lato',sans-serif]">
			<TitleBar />
			<Toolbar />
			<div className="h-[395px] flex shrink-0">
				<ProjectPanel />
				<CompPanel />
				<RightPanel />
			</div>
			<Timeline />
		</div>
	)
}
